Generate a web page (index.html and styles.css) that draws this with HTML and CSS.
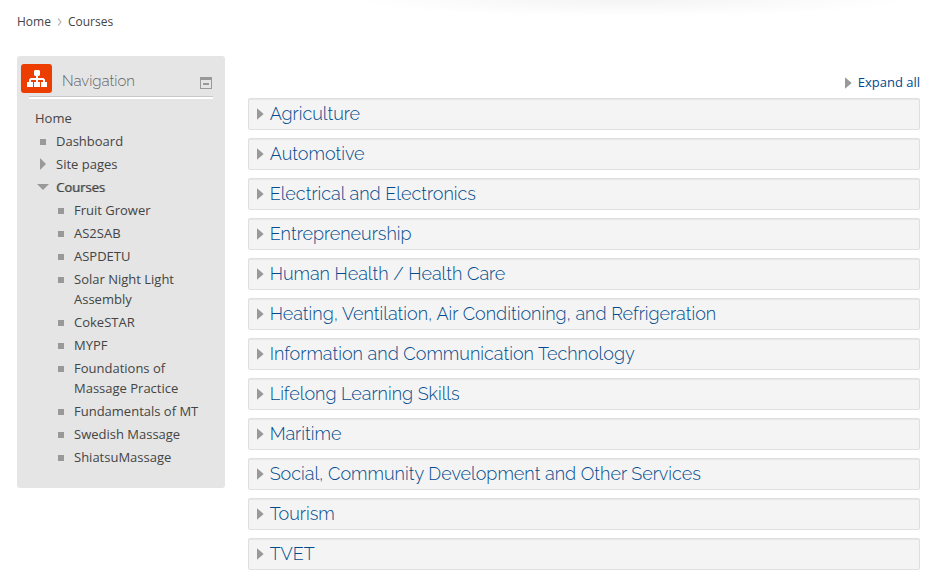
FILE: index.html
```html
<!DOCTYPE html>
<html lang="en">
<head>
  <meta charset="UTF-8">
  <meta name="viewport" content="width=device-width, initial-scale=1">
  <title>Courses</title>
  <link rel="stylesheet" href="styles.css">
</head>
<body>
  <div class="page">
    <nav class="breadcrumb" aria-label="Breadcrumb">
      <a href="#">Home</a>
      <svg class="separator" width="5" height="8" viewBox="0 0 5 8" aria-hidden="true"><path d="M1 0.5L4 4L1 7.5" fill="none" stroke="#bbb" stroke-width="1.2"/></svg>
      <a href="#">Courses</a>
    </nav>

    <div class="columns">
      <aside class="block">
        <header class="block-header">
          <span class="block-icon">
            <svg width="20" height="17" viewBox="0 0 20 17" aria-hidden="true">
              <path d="M8 0h4l1 1v4l-1 1H8L7 5V1zM0 12h6v5H0zM7 12h6v5H7zM14 12h6v5h-6z" fill="#fff"/>
              <path d="M10 5v7M3 12V10L4 9H16L17 10V12" fill="none" stroke="#fff" stroke-width="2"/>
            </svg>
          </span>
          <h2>Navigation</h2>
          <button type="button" class="collapse" aria-label="Hide Navigation block">
            <svg width="12" height="12" viewBox="0 0 12 12" aria-hidden="true">
              <path d="M0 0h12v12H0zM1 3v8h10V3zM3 6h6v2H3z" fill="#999" fill-rule="evenodd"/>
            </svg>
          </button>
        </header>

        <nav class="tree" aria-label="Navigation">
          <a href="#" class="tree-root">Home</a>
          <ul>
            <li class="leaf"><a href="#">Dashboard</a></li>
            <li class="closed"><a href="#">Site pages</a></li>
            <li class="open">
              <a href="#" class="current">Courses</a>
              <ul>
                <li class="leaf"><a href="#">Fruit Grower</a></li>
                <li class="leaf"><a href="#">AS2SAB</a></li>
                <li class="leaf"><a href="#">ASPDETU</a></li>
                <li class="leaf"><a href="#">Solar Night Light Assembly</a></li>
                <li class="leaf"><a href="#">CokeSTAR</a></li>
                <li class="leaf"><a href="#">MYPF</a></li>
                <li class="leaf"><a href="#">Foundations of Massage Practice</a></li>
                <li class="leaf"><a href="#">Fundamentals of MT</a></li>
                <li class="leaf"><a href="#">Swedish Massage</a></li>
                <li class="leaf"><a href="#">ShiatsuMassage</a></li>
              </ul>
            </li>
          </ul>
        </nav>
      </aside>

      <main class="content">
        <div class="expand"><a href="#">Expand all</a></div>
        <div class="categories">
          <h3><a href="#">Agriculture</a></h3>
          <h3><a href="#">Automotive</a></h3>
          <h3><a href="#">Electrical and Electronics</a></h3>
          <h3><a href="#">Entrepreneurship</a></h3>
          <h3><a href="#">Human Health / Health Care</a></h3>
          <h3><a href="#">Heating, Ventilation, Air Conditioning, and Refrigeration</a></h3>
          <h3><a href="#">Information and Communication Technology</a></h3>
          <h3><a href="#">Lifelong Learning Skills</a></h3>
          <h3><a href="#">Maritime</a></h3>
          <h3><a href="#">Social, Community Development and Other Services</a></h3>
          <h3><a href="#">Tourism</a></h3>
          <h3><a href="#">TVET</a></h3>
        </div>
      </main>
    </div>
  </div>
</body>
</html>
```

FILE: styles.css
```css
* {
  box-sizing: border-box;
}

body {
  margin: 0;
  background: #fff radial-gradient(ellipse 280px 16px at 67% 0, #f4f4f4, #fff) no-repeat;
  font-family: "Open Sans", sans-serif;
  font-size: 13px;
  line-height: 20px;
  color: #444;
}

a {
  color: #444;
  text-decoration: none;
}

a:hover {
  text-decoration: underline;
}

h2,
h3 {
  margin: 0;
  font-family: Raleway, "Open Sans", sans-serif;
  font-weight: 300;
}

.page {
  padding: 12px 21px 18px 17px;
}

.breadcrumb {
  display: flex;
  align-items: center;
  gap: 6px;
  font-size: 12px;
}

.columns {
  display: flex;
  align-items: flex-start;
  gap: 23px;
  margin-top: 24px;
}

/* navigation block */
.block {
  flex: 0 0 23%;
  padding: 8px 12px 21px 4px;
  background: #e5e5e5;
  border-radius: 3px;
}

.block-header {
  display: flex;
  align-items: center;
  position: relative;
  height: 35px;
  padding-bottom: 6px;
}

.block-header::after {
  content: "";
  position: absolute;
  left: 8px;
  right: 0;
  bottom: 0;
  height: 2px;
  background: #fff;
  border-top: 1px solid #c8c8c8;
}

.block-icon {
  display: flex;
  align-items: center;
  justify-content: flex-end;
  width: 31px;
  height: 29px;
  padding-right: 5px;
  background: #ec3e00;
  border-radius: 3px;
}

.block-header h2 {
  flex: 1;
  margin-left: 10px;
  padding-top: 4px;
  font-size: 15px;
  color: #666;
}

.collapse {
  display: flex;
  margin: 9px 1px 0 0;
  padding: 0;
  border: 0;
  background: none;
  cursor: pointer;
}

.tree {
  padding: 9px 0 0 14px;
}

.tree a {
  display: block;
}

.tree ul {
  margin: 0;
  padding: 0;
  list-style: none;
}

.tree li {
  position: relative;
  margin-top: 3px;
  padding-left: 21px;
}

.tree li li {
  padding-left: 18px;
}

.tree li::before {
  content: "";
  position: absolute;
  top: 8px;
  left: 5px;
  width: 6px;
  height: 6px;
  background: #999;
}

.tree li li::before {
  left: 2px;
}

.tree .closed::before {
  top: 4px;
  height: 12px;
  clip-path: polygon(0 0, 100% 50%, 0 100%);
}

.tree .open::before {
  top: 7px;
  left: 2px;
  width: 12px;
  clip-path: polygon(0 0, 100% 0, 50% 100%);
}

.tree .current {
  text-shadow: 1px 0 0 rgba(68, 68, 68, 0.5);
}

/* course categories */
.content {
  flex: 1;
  min-width: 0;
}

.content a {
  color: #004b8d;
}

.expand {
  padding: 16px 0 6px;
  text-align: right;
}

.expand a::before,
.categories a::before {
  content: "";
  display: inline-block;
  width: 7px;
  height: 12px;
  margin-right: 6px;
  background: #999;
  clip-path: polygon(0 0, 100% 50%, 0 100%);
  vertical-align: -2px;
}

.categories {
  display: grid;
  gap: 8px;
}

.categories h3 {
  min-height: 32px;
  padding: 0 8px;
  background: #f4f4f4;
  border: 1px solid #dfdfdf;
  border-radius: 2px;
  box-shadow: inset 0 1px 1px #e6e6e6;
  font-size: 18px;
  line-height: 30px;
}

.categories a::before {
  vertical-align: 0;
}
```
